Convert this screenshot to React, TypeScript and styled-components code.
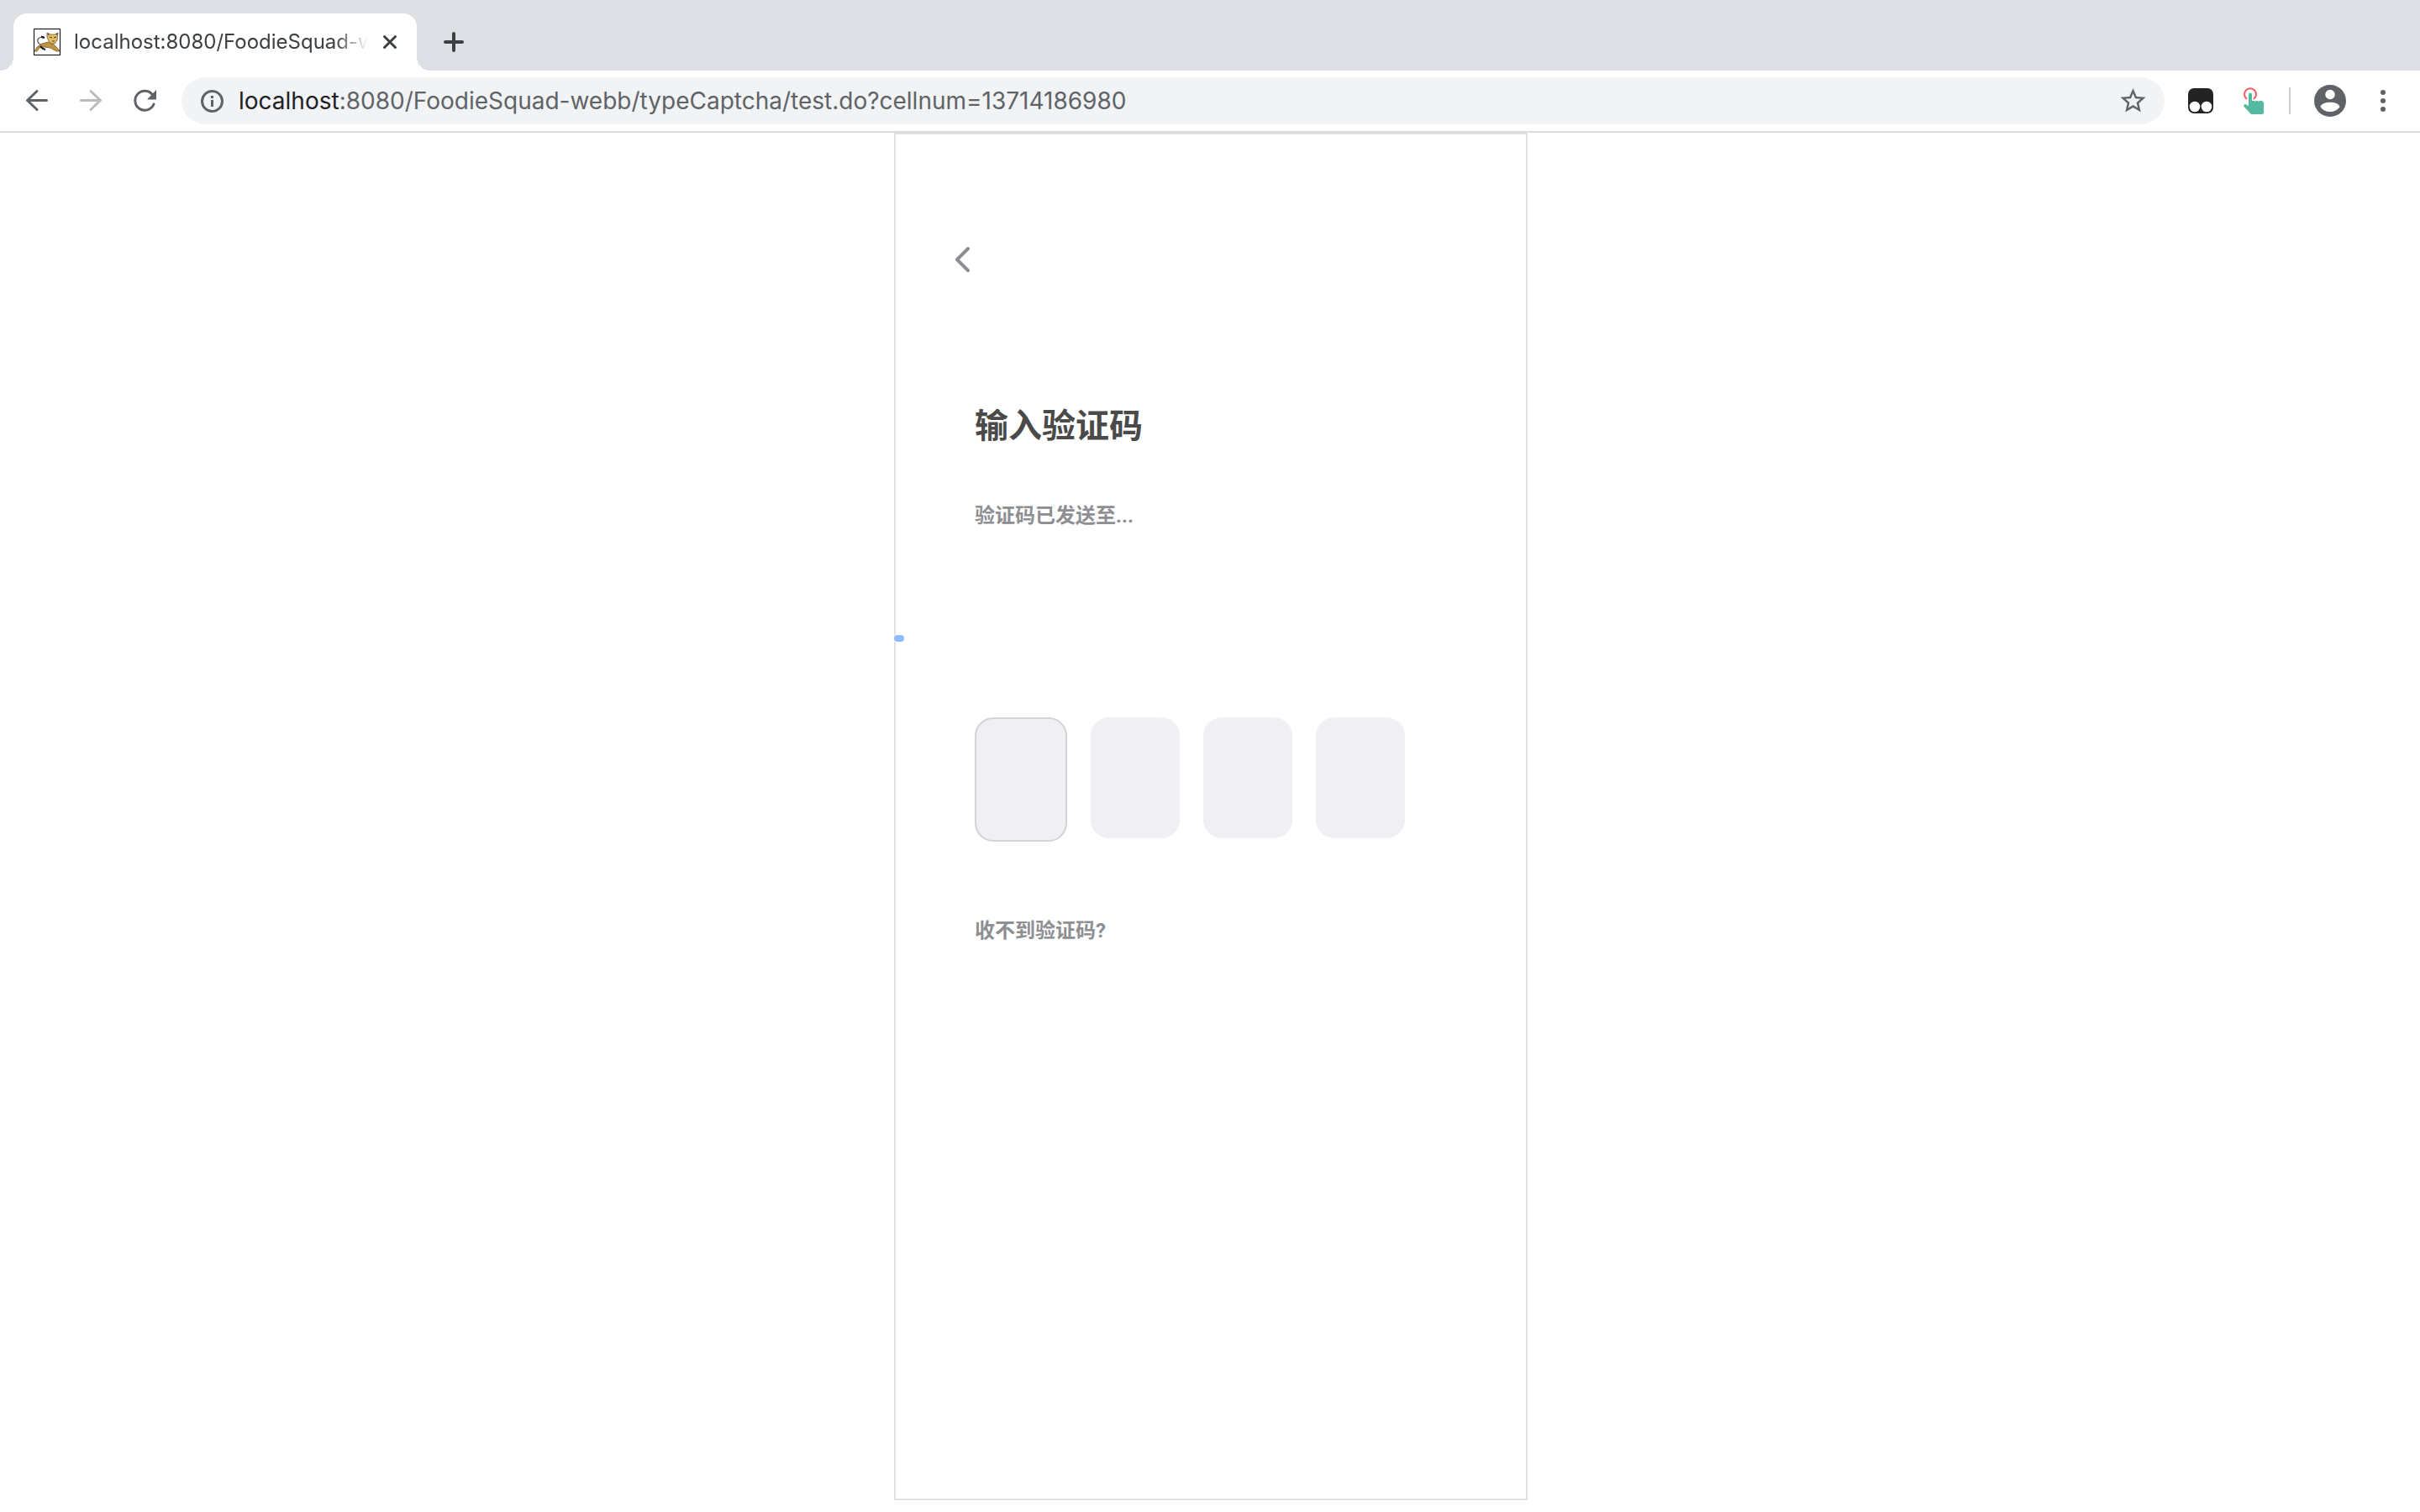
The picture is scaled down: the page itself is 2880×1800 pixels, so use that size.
import React from "react";
import styled, { createGlobalStyle } from "styled-components";

const GlobalStyle = createGlobalStyle`
  * { box-sizing: border-box; }
  body {
    margin: 0;
    background: #fff;
    font-family: Roboto, "Noto Sans CJK SC", sans-serif;
  }
  svg { display: block; flex: none; }
  h1, p { margin: 0; }
`;

const IconButton = styled.button<{ $size?: number }>`
  display: flex;
  align-items: center;
  justify-content: center;
  flex: none;
  width: ${(p) => p.$size ?? 32}px;
  height: ${(p) => p.$size ?? 32}px;
  padding: 0;
  border: 0;
  background: transparent;
`;

const TabStrip = styled.header`
  display: flex;
  height: 84px;
  padding: 16px 16px 0;
  background: #dfe0e6;
`;

const Tab = styled.div`
  position: relative;
  display: flex;
  align-items: center;
  width: 480px;
  padding: 0 16px 0 24px;
  border-radius: 16px 16px 0 0;
  background: #fff;

  &::before,
  &::after {
    content: "";
    position: absolute;
    bottom: 0;
    width: 16px;
    height: 16px;
  }
  &::before {
    left: -16px;
    background: radial-gradient(circle at 0 0, transparent 16px, #fff 16px);
  }
  &::after {
    right: -16px;
    background: radial-gradient(circle at 100% 0, transparent 16px, #fff 16px);
  }
`;

const TabTitle = styled.span`
  flex: 1;
  margin: 0 10px 0 16px;
  overflow: hidden;
  white-space: nowrap;
  font-family: Inter, sans-serif;
  font-size: 24px;
  line-height: 32px;
  color: #3c4043;
  mask-image: linear-gradient(to right, #000 calc(100% - 40px), transparent);
`;

const NewTab = styled.div`
  display: flex;
  align-items: center;
  padding-left: 28px;
`;

const Toolbar = styled.nav`
  display: flex;
  align-items: center;
  height: 74px;
  padding: 0 28px;
  border-bottom: 2px solid #dadbe1;
  background: #fff;
`;

const NavGroup = styled.div`
  display: flex;
  gap: 32px;
  margin-right: 28px;
`;

const AddressBar = styled.form`
  display: flex;
  align-items: center;
  flex: 1;
  height: 56px;
  padding: 0 20px;
  border-radius: 28px;
  background: #f1f3f4;
`;

const Address = styled.a`
  flex: 1;
  margin-left: 16px;
  font-family: Inter, sans-serif;
  font-size: 28px;
  line-height: 40px;
  color: #5f6368;
  text-decoration: none;
  white-space: nowrap;
`;

const Host = styled.span`
  color: #202124;
`;

const Actions = styled.div`
  display: flex;
  align-items: center;
  gap: 28px;
  padding-left: 28px;
`;

const Divider = styled.span`
  width: 2px;
  height: 32px;
  background: #ccced1;
`;

const Page = styled.main`
  display: flex;
  justify-content: center;
  padding-left: 2px;
`;

const Phone = styled.section`
  position: relative;
  width: 754px;
  min-height: 1628px;
  padding: 134px 94px 0;
  border: 2px solid #e0e0e0;
  background: #fff;
`;

const BackButton = styled(IconButton)`
  margin-left: -32px;
`;

const Title = styled.h1`
  margin-top: 152px;
  font-size: 40px;
  line-height: 60px;
  font-weight: 700;
  color: #4a4a4a;
`;

const Note = styled.p`
  font-size: 24px;
  line-height: 36px;
  font-weight: 700;
  color: #8e8e93;
`;

const Sent = styled(Note)`
  margin-top: 58px;
`;

const Resend = styled(Note)`
  margin-top: 88px;
`;

const LoadingDot = styled.span`
  position: absolute;
  top: 596px;
  left: -2px;
  width: 12px;
  height: 8px;
  border-radius: 4px;
  background: #8ebcf8;
  box-shadow: 0 0 0 1px #fff;
`;

const Code = styled.fieldset`
  display: flex;
  align-items: flex-start;
  gap: 28px;
  min-width: 0;
  margin: 222px 0 0;
  padding: 0;
  border: 0;
`;

const Digit = styled.input<{ $active?: boolean }>`
  box-sizing: content-box;
  width: 106px;
  height: 144px;
  padding: 0;
  border: ${(p) => (p.$active ? "2px solid #d3d3d6" : "0")};
  border-radius: 22px;
  outline: 0;
  background: #efeff4;
  text-align: center;
  font-size: 60px;
  color: #4a4a4a;
`;

const CatIcon = () => (
  <svg width="32" height="32" viewBox="0 0 32 32" aria-hidden="true">
    <rect x=".5" y=".5" width="31" height="31" fill="#fff" stroke="#000" />
    <path d="M11 20C6 19 4 16 5 13c1-2 4-3 7-2" fill="none" stroke="#444" strokeWidth="1.2" />
    <path d="M9 9.500l4 1.500" stroke="#111" strokeWidth="2" />
    <path d="M1 27l3-5 6-4 7-2 7 3 7 7v1h-4l-7-4-7-1-6 1-3 4z" fill="#c0923f" stroke="#67532c" strokeWidth=".7" />
    <path d="M16 5l4 2h5l4-2-1 9-3 4h-4l-3-3-2-5z" fill="#e6bd60" stroke="#55482d" strokeWidth=".7" />
    <path d="M19 10l3 1m2 0l3-1m-5 5h3M17 6l1 2m10-2l-1 2" stroke="#333" fill="none" />
    <path d="M8 21l3 3 3 1" stroke="#111" strokeWidth="2" fill="none" />
  </svg>
);

const Arrow = ({ color, flip = false }: { color: string; flip?: boolean }) => (
  <svg width="32" height="32" viewBox="0 0 32 32" fill="none" stroke={color} strokeWidth="3" strokeLinecap="round" strokeLinejoin="round">
    <path d={flip ? "M4.5 15.5h23M16 4.500l11.500 11-11.500 11" : "M27.500 15.500h-23M16 4.500l-11.500 11 11.500 11"} />
  </svg>
);

export default function App() {
  return (
    <>
      <GlobalStyle />
      <TabStrip>
        <Tab>
          <CatIcon />
          <TabTitle>localhost:8080/FoodieSquad-webb</TabTitle>
          <IconButton aria-label="Close tab">
            <svg width="32" height="32" viewBox="0 0 32 32" stroke="#3c4043" strokeWidth="3" strokeLinecap="round">
              <path d="M9.500 9.500l13 13m0-13l-13 13" />
            </svg>
          </IconButton>
        </Tab>
        <NewTab>
          <IconButton aria-label="New tab">
            <svg width="32" height="32" viewBox="0 0 32 32" stroke="#3c4043" strokeWidth="4" strokeLinecap="round">
              <path d="M16 6v20M6 16h20" />
            </svg>
          </IconButton>
        </NewTab>
      </TabStrip>
      <Toolbar>
        <NavGroup>
          <IconButton aria-label="Back"><Arrow color="#5f6368" /></IconButton>
          <IconButton aria-label="Forward"><Arrow color="#babcbe" flip /></IconButton>
          <IconButton aria-label="Reload">
            <svg width="32" height="32" viewBox="0 0 32 32" fill="none">
              <path d="M27 20A11.500 11.500 0 1 1 25 8.200" stroke="#5f6368" strokeWidth="3" strokeLinecap="round" />
              <path d="M30 3v11.500H19z" fill="#5f6368" />
            </svg>
          </IconButton>
        </NavGroup>
        <AddressBar onSubmit={(e) => e.preventDefault()}>
          <IconButton type="button" aria-label="Site information">
            <svg width="32" height="32" viewBox="0 0 32 32" fill="none" stroke="#5f6368" strokeWidth="3">
              <circle cx="16.500" cy="16.500" r="12" />
              <path d="M16.500 15v8M16.500 10v3" />
            </svg>
          </IconButton>
          <Address href="#">
            <Host>localhost</Host>:8080/FoodieSquad-webb/typeCaptcha/test.do?cellnum=13714186980
          </Address>
          <IconButton type="button" aria-label="Bookmark">
            <svg width="36" height="36" viewBox="1 0 24 24" fill="#5f6368">
              <path d="M22 9.240l-7.190-.620L12 2 9.190 8.630 2 9.240l5.460 4.730L5.820 21 12 17.270 18.180 21l-1.630-7.030L22 9.240zM12 15.400l-3.760 2.270 1-4.280-3.320-2.880 4.380-.380L12 6.100l1.710 4.040 4.380.380-3.320 2.880 1 4.280L12 15.400z" />
            </svg>
          </IconButton>
        </AddressBar>
        <Actions>
          <IconButton aria-label="Script extension">
            <svg width="32" height="32" viewBox="0 0 32 32">
              <rect x="0" y="1" width="30" height="30" rx="7" fill="#232323" />
              <circle cx="8" cy="23" r="6.300" fill="#fff" />
              <circle cx="22" cy="23" r="6.300" fill="#fff" />
            </svg>
          </IconButton>
          <IconButton aria-label="Click extension">
            <svg width="32" height="32" viewBox="0 0 32 32">
              <path d="M10 14a7 7 0 1 1 8 0" fill="none" stroke="#ee5b60" strokeWidth="2" />
              <path d="M12 8.500a2 2 0 0 1 4 0V16h3l1 1 1-1h2l1 1 1-1h3l2 2v12q0 2-2 2H15L6.500 23q-1-3 2-3l3.500 2z" fill="#55b9a1" />
            </svg>
          </IconButton>
          <Divider />
          <IconButton $size={38} aria-label="Profile">
            <svg width="38" height="38" viewBox="0 0 38 38">
              <circle cx="19" cy="19" r="19" fill="#5f6368" />
              <circle cx="19" cy="11.500" r="5.700" fill="#fff" />
              <path d="M7.500 26c2-7 21-7 23 0-5 8-18 8-23 0z" fill="#fff" />
            </svg>
          </IconButton>
          <IconButton aria-label="Menu">
            <svg width="32" height="32" viewBox="0 0 32 32" fill="#5f6368">
              <circle cx="16" cy="6" r="3" />
              <circle cx="16" cy="16" r="3" />
              <circle cx="16" cy="26" r="3" />
            </svg>
          </IconButton>
        </Actions>
      </Toolbar>
      <Page>
        <Phone>
          <LoadingDot />
          <BackButton aria-label="返回">
            <svg width="32" height="32" viewBox="0 0 32 32" fill="none" stroke="#8e8e93" strokeWidth="4" strokeLinecap="round" strokeLinejoin="round">
              <path d="M24 2L11 15l13 13" />
            </svg>
          </BackButton>
          <Title>输入验证码</Title>
          <Sent>验证码已发送至...</Sent>
          <Code aria-label="验证码">
            {[1, 2, 3, 4].map((n) => (
              <Digit key={n} $active={n === 1} aria-label={`第${n}位`} inputMode="numeric" maxLength={1} />
            ))}
          </Code>
          <Resend>收不到验证码?</Resend>
        </Phone>
      </Page>
    </>
  );
}
